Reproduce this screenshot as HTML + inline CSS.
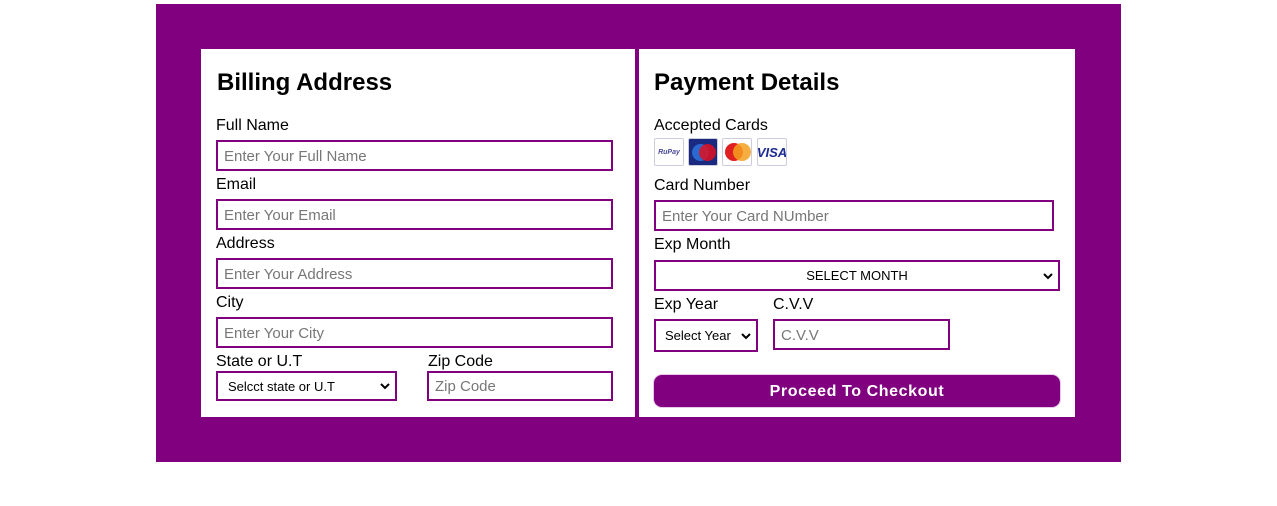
<!DOCTYPE html>
<html><head><style>
body{margin:0;width:1277px;height:506px;background:#fff;font-family:"Liberation Sans",Arial,sans-serif;position:relative;overflow:hidden}
.a{position:absolute}
.bg{left:156px;top:4px;width:965px;height:458px;background:#800080}
.p{background:#fff;top:49px;height:368px}
h2{position:absolute;margin:0;font-size:24px;font-weight:bold;line-height:28px}
.l{position:absolute;font-size:16px;line-height:18px;color:#000}
.i{position:absolute;box-sizing:border-box;border:2px solid #800080;font-size:15px;color:#777;padding-left:6px;padding-top:1px;display:flex;align-items:center;background:#fff}
.s{position:absolute;box-sizing:border-box;border:2px solid #800080;font-size:13px;color:#000;display:flex;align-items:center;background:#fff}
.s svg{position:absolute;right:5px;top:50%;margin-top:-4px}
.c{position:absolute;top:138px;width:30px;height:28px;box-sizing:border-box;border:1px solid #ccd;border-radius:2px;overflow:hidden}
</style></head><body>
<div class="a bg"></div>
<div class="a p" style="left:201px;width:434px"></div>
<div class="a p" style="left:639px;width:436px"></div>

<h2 style="left:217px;top:69px">Billing Address</h2>
<div class="l" style="left:216px;top:117px">Full Name</div>
<div class="i" style="left:216px;top:140px;width:397px;height:31px">Enter Your Full Name</div>
<div class="l" style="left:216px;top:176px">Email</div>
<div class="i" style="left:216px;top:199px;width:397px;height:31px">Enter Your Email</div>
<div class="l" style="left:216px;top:235px">Address</div>
<div class="i" style="left:216px;top:258px;width:397px;height:31px">Enter Your Address</div>
<div class="l" style="left:216px;top:294px">City</div>
<div class="i" style="left:216px;top:317px;width:397px;height:31px">Enter Your City</div>
<div class="l" style="left:216px;top:353px">State or U.T</div>
<div class="s" style="left:216px;top:371px;width:181px;height:30px;padding-left:10px">Selcct state or U.T<svg width="10" height="8" viewBox="0 0 10 8"><path d="M1 2l4 4 4-4" stroke="#000" stroke-width="2" fill="none"/></svg></div>
<div class="l" style="left:428px;top:353px">Zip Code</div>
<div class="i" style="left:427px;top:371px;width:186px;height:30px">Zip Code</div>

<h2 style="left:654px;top:69px">Payment Details</h2>
<div class="l" style="left:654px;top:117px">Accepted Cards</div>
<div class="c" style="left:654px;background:#fff;font-size:7px;font-style:italic;font-weight:bold;color:#4a4a9a;display:flex;align-items:center;justify-content:center">RuPay</div>
<div class="c" style="left:688px;background:#1a2a80"><div class="a" style="left:3px;top:5px;width:17px;height:17px;border-radius:50%;background:#2a6ad0"></div><div class="a" style="left:10px;top:5px;width:17px;height:17px;border-radius:50%;background:#e01020;opacity:.85"></div></div>
<div class="c" style="left:722px;background:#fff"><div class="a" style="left:2px;top:4px;width:18px;height:18px;border-radius:50%;background:#e02020"></div><div class="a" style="left:10px;top:4px;width:18px;height:18px;border-radius:50%;background:#f5a020;opacity:.85"></div></div>
<div class="c" style="left:757px;background:#fff;font-size:13px;font-weight:bold;font-style:italic;color:#1a2a90;display:flex;align-items:center;justify-content:center">VISA</div>
<div class="l" style="left:654px;top:177px">Card Number</div>
<div class="i" style="left:654px;top:200px;width:400px;height:31px">Enter Your Card NUmber</div>
<div class="l" style="left:654px;top:236px">Exp Month</div>
<div class="s" style="left:654px;top:260px;width:406px;height:31px;justify-content:center">SELECT MONTH<svg width="10" height="8" viewBox="0 0 10 8"><path d="M1 2l4 4 4-4" stroke="#000" stroke-width="2" fill="none"/></svg></div>
<div class="l" style="left:654px;top:296px">Exp Year</div>
<div class="l" style="left:773px;top:296px">C.V.V</div>
<div class="s" style="left:654px;top:319px;width:104px;height:33px;padding-left:9px">Select Year<svg width="10" height="8" viewBox="0 0 10 8"><path d="M1 2l4 4 4-4" stroke="#000" stroke-width="2" fill="none"/></svg></div>
<div class="i" style="left:773px;top:319px;width:177px;height:31px">C.V.V</div>
<div class="a" style="left:654px;top:375px;width:406px;height:32px;background:#800080;border-radius:8px;color:#fff;font-weight:bold;font-size:16px;letter-spacing:0.6px;padding-top:2px;box-sizing:border-box;display:flex;align-items:center;justify-content:center;box-shadow:0 0 0 1px #e8c8e8">Proceed To Checkout</div>
</body></html>
